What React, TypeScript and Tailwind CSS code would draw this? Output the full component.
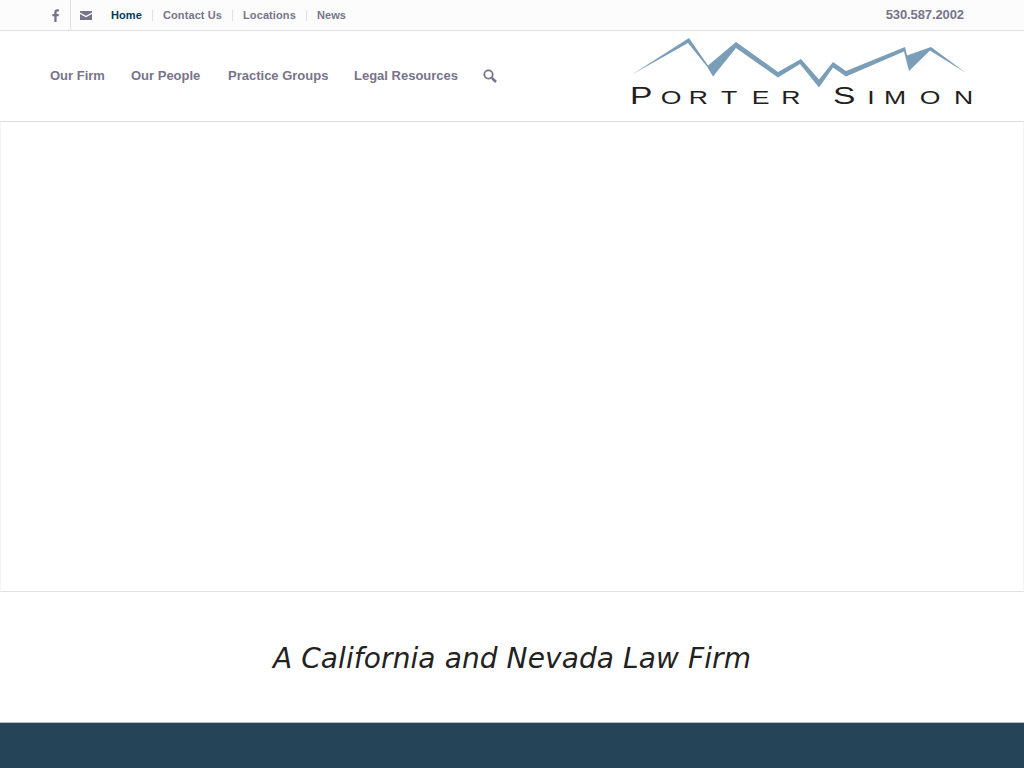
const topLinks = ['Contact Us', 'Locations', 'News'];
const mainLinks = [
  { label: 'Our Firm', width: 'w-[55px]' },
  { label: 'Our People', width: 'w-[71px]' },
  { label: 'Practice Groups', width: 'w-[100px]' },
  { label: 'Legal Resources', width: 'w-[103px]' },
];

function Logo() {
  return (
    <svg width="346" height="78" viewBox="0 0 346 78" className="block">
      <polygon
        fill="#7a9db8"
        points="2,37.5 59,1 78,28.5 106,5 148,35 171,22 189,42.5 203,25 216,34 275,10 277,18.5 301,10 336,36 300,13.5 279,34 274,14.5 216,39.5 203,30.5 189,50.5 170,27 148,40.5 106,11 83,39.5 77,29.5 58,6"
      />
      <g
        transform="scale(1.4 1)"
        fill="#231f20"
        fontFamily="'Liberation Sans', sans-serif"
        fontSize="19"
      >
        <text x="0" y="67.5" fontSize="24">P</text>
        <text x="22 42 65 87 108" y="67.5">ORTER</text>
        <text x="145" y="67.5" fontSize="24">S</text>
        <text x="169.5 181.5 207 231.5" y="67.5">IMON</text>
      </g>
    </svg>
  );
}

export default function App() {
  return (
    <div className="min-h-[768px] bg-white flex flex-col font-['Liberation_Sans',sans-serif] overflow-hidden">
      {/* Top bar */}
      <div className="h-[31px] shrink-0 bg-[#fcfcfc] border-b border-[#e1e1e1] flex items-center pl-[50px] pr-[60px]">
        <div className="flex items-stretch self-stretch">
          <div className="w-[21px] flex items-center justify-start pl-[2px] border-r border-[#e1e1e1]">
            <svg width="8" height="13" viewBox="0 0 8 13" fill="#77748a">
              <path d="M2.3 13V7.2H0.4V5h1.9V3.3C2.3 1.3 3.4 0.3 5.2 0.3c.8 0 1.5.1 1.8.1v2.1H5.8c-1 0-1.2.5-1.2 1.1V5h2.3l-.3 2.2h-2V13z" />
            </svg>
          </div>
          <div className="flex items-center pl-[9px] w-[40px]">
            <svg width="12" height="9" viewBox="0 0 12 9" fill="#77748a">
              <path d="M0 0h12v1.6L6 4.8 0 1.6z" />
              <path d="M0 3l6 3.2L12 3v6H0z" />
            </svg>
          </div>
        </div>
        <nav className="flex items-center text-[11px] font-bold leading-none tracking-[0.1px] text-[#77748a]">
          <span className="text-[#023a5b] pr-[10px]">Home</span>
          {topLinks.map((link) => (
            <span key={link} className="border-l border-[#e1e1e1] px-[10px]">
              {link}
            </span>
          ))}
        </nav>
        <span className="ml-auto text-[13px] font-bold tracking-[-0.1px] text-[#77748a]">530.587.2002</span>
      </div>

      {/* Main header */}
      <header className="h-[91px] shrink-0 border-b border-[#e1e1e1] flex items-center pl-[50px] pr-[48px]">
        <nav className="flex items-center gap-[26px] text-[13px] font-bold text-[#77748a]">
          {mainLinks.map((link) => (
            <span key={link.label} className={`${link.width} whitespace-nowrap`}>
              {link.label}
            </span>
          ))}
          <svg width="14" height="14" viewBox="0 0 14 14" fill="none" stroke="#77748a">
            <circle cx="5.5" cy="5.5" r="4.2" strokeWidth="1.8" />
            <path d="M8.8 8.8L13 13" strokeWidth="2.6" />
          </svg>
        </nav>
        <div className="ml-auto">
          <Logo />
        </div>
      </header>

      {/* Empty slider */}
      <div className="h-[470px] shrink-0 border-x border-b border-x-[#f4f4f4] border-b-[#e1e1e1]" />

      {/* Tagline */}
      <div className="h-[130px] shrink-0 flex items-center justify-center pt-[3px]">
        <p className="font-['DejaVu_Sans',sans-serif] italic text-[28px] tracking-[0.1px] text-[#222222]">
          A California and Nevada Law Firm
        </p>
      </div>

      {/* Footer */}
      <footer className="flex-1 bg-[#264457] border-t border-[#b8bdc0]" />
    </div>
  );
}
